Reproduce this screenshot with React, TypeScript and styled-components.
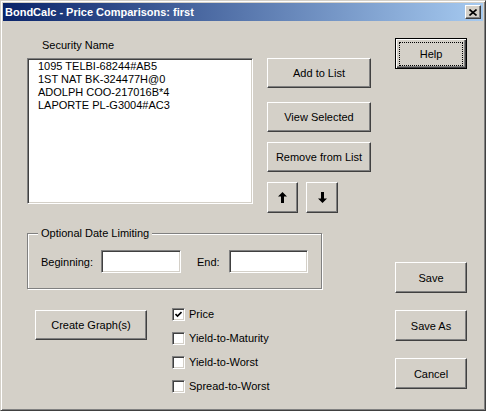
import React from 'react';
import styled, { createGlobalStyle, css } from 'styled-components';

const GlobalStyle = createGlobalStyle`
  html, body {
    margin: 0;
    padding: 0;
    background: #d4d0c8;
  }
  body {
    font-family: "Liberation Sans", Arial, sans-serif;
    font-size: 11px;
    color: #000;
  }
`;

const raised = css`
  border: 1px solid;
  border-color: #ffffff #404040 #404040 #ffffff;
  box-shadow: inset -1px -1px 0 #808080;
`;

const sunken = css`
  border: 1px solid;
  border-color: #808080 #ffffff #ffffff #808080;
  box-shadow: inset 1px 1px 0 #404040, inset -1px -1px 0 #d4d0c8;
`;

const Window = styled.div`
  box-sizing: border-box;
  width: 486px;
  height: 411px;
  background: #d4d0c8;
  border: 1px solid;
  border-color: #d4d0c8 #404040 #404040 #d4d0c8;
  box-shadow: inset 1px 1px 0 #ffffff, inset -1px -1px 0 #808080;
  padding: 2px;
  display: flex;
  flex-direction: column;
`;

const TitleBar = styled.div`
  height: 18px;
  flex-shrink: 0;
  display: flex;
  align-items: center;
  justify-content: space-between;
  padding: 0 2px;
  background: linear-gradient(to right, #0a246a, #a6caf0);
`;

const TitleText = styled.span`
  color: #fff;
  font-weight: bold;
  font-size: 11px;
  white-space: nowrap;
`;

const CloseButton = styled.button`
  box-sizing: border-box;
  width: 16px;
  height: 14px;
  padding: 0;
  background: #d4d0c8;
  ${raised};
  display: flex;
  align-items: center;
  justify-content: center;
`;

const Body = styled.div`
  flex: 1;
  display: flex;
  padding-left: 24px;
`;

const LeftArea = styled.div`
  width: 345px;
  display: flex;
  flex-direction: column;
`;

const TopRow = styled.div`
  display: flex;
`;

const ListColumn = styled.div`
  width: 226px;
  display: flex;
  flex-direction: column;
`;

const FieldLabel = styled.div`
  margin-top: 18px;
  padding-left: 15px;
  line-height: 13px;
`;

const ListBox = styled.div`
  box-sizing: border-box;
  margin-top: 6px;
  height: 146px;
  background: #fff;
  ${sunken};
  padding: 1px 0 0 10px;
`;

const ListItem = styled.div`
  line-height: 13px;
  white-space: nowrap;
`;

const ButtonColumn = styled.div`
  width: 104px;
  margin-left: 14px;
  margin-top: 37px;
  display: flex;
  flex-direction: column;
`;

const Button = styled.button<{ $w?: number; $h?: number; $mt?: number }>`
  box-sizing: border-box;
  width: ${p => (p.$w ? `${p.$w}px` : '100%')};
  height: ${p => p.$h ?? 30}px;
  margin-top: ${p => p.$mt ?? 0}px;
  padding: 0;
  background: #d4d0c8;
  ${raised};
  font-family: "Liberation Sans", Arial, sans-serif;
  font-size: 11px;
  color: #000;
  display: flex;
  align-items: center;
  justify-content: center;
  flex-shrink: 0;
`;

const DefaultButton = styled(Button)`
  border: 1px solid #000;
  box-shadow: inset 1px 1px 0 #ffffff, inset -1px -1px 0 #404040, inset -2px -2px 0 #808080;
  align-items: stretch;
  justify-content: stretch;
`;

const FocusRing = styled.span`
  flex: 1;
  margin: 3px 3px 2px 3px;
  border: 1px dotted #000;
  display: flex;
  align-items: center;
  justify-content: center;
`;

const ArrowRow = styled.div`
  display: flex;
  gap: 8px;
  margin-top: 10px;
`;

const GroupFrame = styled.div`
  box-sizing: border-box;
  width: 295px;
  height: 56px;
  margin-top: 20px;
  border: 1px solid #808080;
  box-shadow: inset 1px 1px 0 #ffffff, 1px 1px 0 #ffffff;
  display: flex;
  flex-direction: column;
`;

const Legend = styled.span`
  align-self: flex-start;
  margin: -7px 0 0 10px;
  padding: 0 3px;
  line-height: 13px;
  background: #d4d0c8;
`;

const DateRow = styled.div`
  display: flex;
  align-items: center;
  margin-top: 10px;
  padding-left: 13px;
`;

const DateLabel = styled.span<{ $w: number; $ml?: number }>`
  width: ${p => p.$w}px;
  margin-left: ${p => p.$ml ?? 0}px;
  flex-shrink: 0;
`;

const TextBox = styled.div<{ $w: number }>`
  box-sizing: border-box;
  width: ${p => p.$w}px;
  height: 23px;
  background: #fff;
  ${sunken};
`;

const BottomRow = styled.div`
  display: flex;
  align-items: flex-start;
`;

const CheckList = styled.div`
  margin-left: 25px;
  margin-top: 13px;
  display: flex;
  flex-direction: column;
`;

const CheckRow = styled.div`
  height: 24px;
  display: flex;
  align-items: center;
`;

const CheckBox = styled.span`
  box-sizing: border-box;
  width: 13px;
  height: 13px;
  background: #fff;
  ${sunken};
  display: flex;
  align-items: center;
  justify-content: center;
`;

const CheckLabel = styled.span`
  margin-left: 4px;
  line-height: 13px;
`;

const RightColumn = styled.div`
  width: 72px;
  margin-left: 23px;
  display: flex;
  flex-direction: column;
`;

const securities = [
  '1095 TELBI-68244#AB5',
  '1ST NAT BK-324477H@0',
  'ADOLPH COO-217016B*4',
  'LAPORTE PL-G3004#AC3',
];

const options = [
  { label: 'Price', checked: true },
  { label: 'Yield-to-Maturity', checked: false },
  { label: 'Yield-to-Worst', checked: false },
  { label: 'Spread-to-Worst', checked: false },
];

const ArrowIcon = ({ down }: { down?: boolean }) => (
  <svg width="9" height="11" viewBox="0 0 9 11" style={{ transform: down ? 'rotate(180deg)' : undefined }}>
    <path d="M4.5 0 L9 4.5 L6 4.5 L6 11 L3 11 L3 4.5 L0 4.5 Z" fill="#000" />
  </svg>
);

const App: React.FC = () => {
  return (
    <>
      <GlobalStyle />
      <Window>
        <TitleBar>
          <TitleText>BondCalc - Price Comparisons: first</TitleText>
          <CloseButton aria-label="Close">
            <svg width="8" height="7" viewBox="0 0 8 7">
              <path d="M0.5 0.5 L7.5 6.5 M7.5 0.5 L0.5 6.5" stroke="#000" strokeWidth="1.6" />
            </svg>
          </CloseButton>
        </TitleBar>
        <Body>
          <LeftArea>
            <TopRow>
              <ListColumn>
                <FieldLabel>Security Name</FieldLabel>
                <ListBox>
                  {securities.map(s => (
                    <ListItem key={s}>{s}</ListItem>
                  ))}
                </ListBox>
              </ListColumn>
              <ButtonColumn>
                <Button $h={30}>Add to List</Button>
                <Button $h={30} $mt={14}>View Selected</Button>
                <Button $h={30} $mt={10}>Remove from List</Button>
                <ArrowRow>
                  <Button $w={31} $h={31}><ArrowIcon /></Button>
                  <Button $w={32} $h={31}><ArrowIcon down /></Button>
                </ArrowRow>
              </ButtonColumn>
            </TopRow>

            <GroupFrame>
              <Legend>Optional Date Limiting</Legend>
              <DateRow>
                <DateLabel $w={60}>Beginning:</DateLabel>
                <TextBox $w={80} />
                <DateLabel $w={32} $ml={16}>End:</DateLabel>
                <TextBox $w={79} />
              </DateRow>
            </GroupFrame>

            <BottomRow>
              <Button $w={112} $h={30} $mt={21} style={{ marginLeft: 8 }}>Create Graph(s)</Button>
              <CheckList>
                {options.map(o => (
                  <CheckRow key={o.label}>
                    <CheckBox>
                      {o.checked && (
                        <svg width="7" height="7" viewBox="0 0 7 7">
                          <path d="M0.5 3 L2.5 5 L6.5 1" stroke="#000" strokeWidth="1.6" fill="none" />
                        </svg>
                      )}
                    </CheckBox>
                    <CheckLabel>{o.label}</CheckLabel>
                  </CheckRow>
                ))}
              </CheckList>
            </BottomRow>
          </LeftArea>

          <RightColumn>
            <DefaultButton $h={31} $mt={17}>
              <FocusRing>Help</FocusRing>
            </DefaultButton>
            <Button $h={31} $mt={193}>Save</Button>
            <Button $h={31} $mt={17}>Save As</Button>
            <Button $h={31} $mt={17}>Cancel</Button>
          </RightColumn>
        </Body>
      </Window>
    </>
  );
};

export default App;
